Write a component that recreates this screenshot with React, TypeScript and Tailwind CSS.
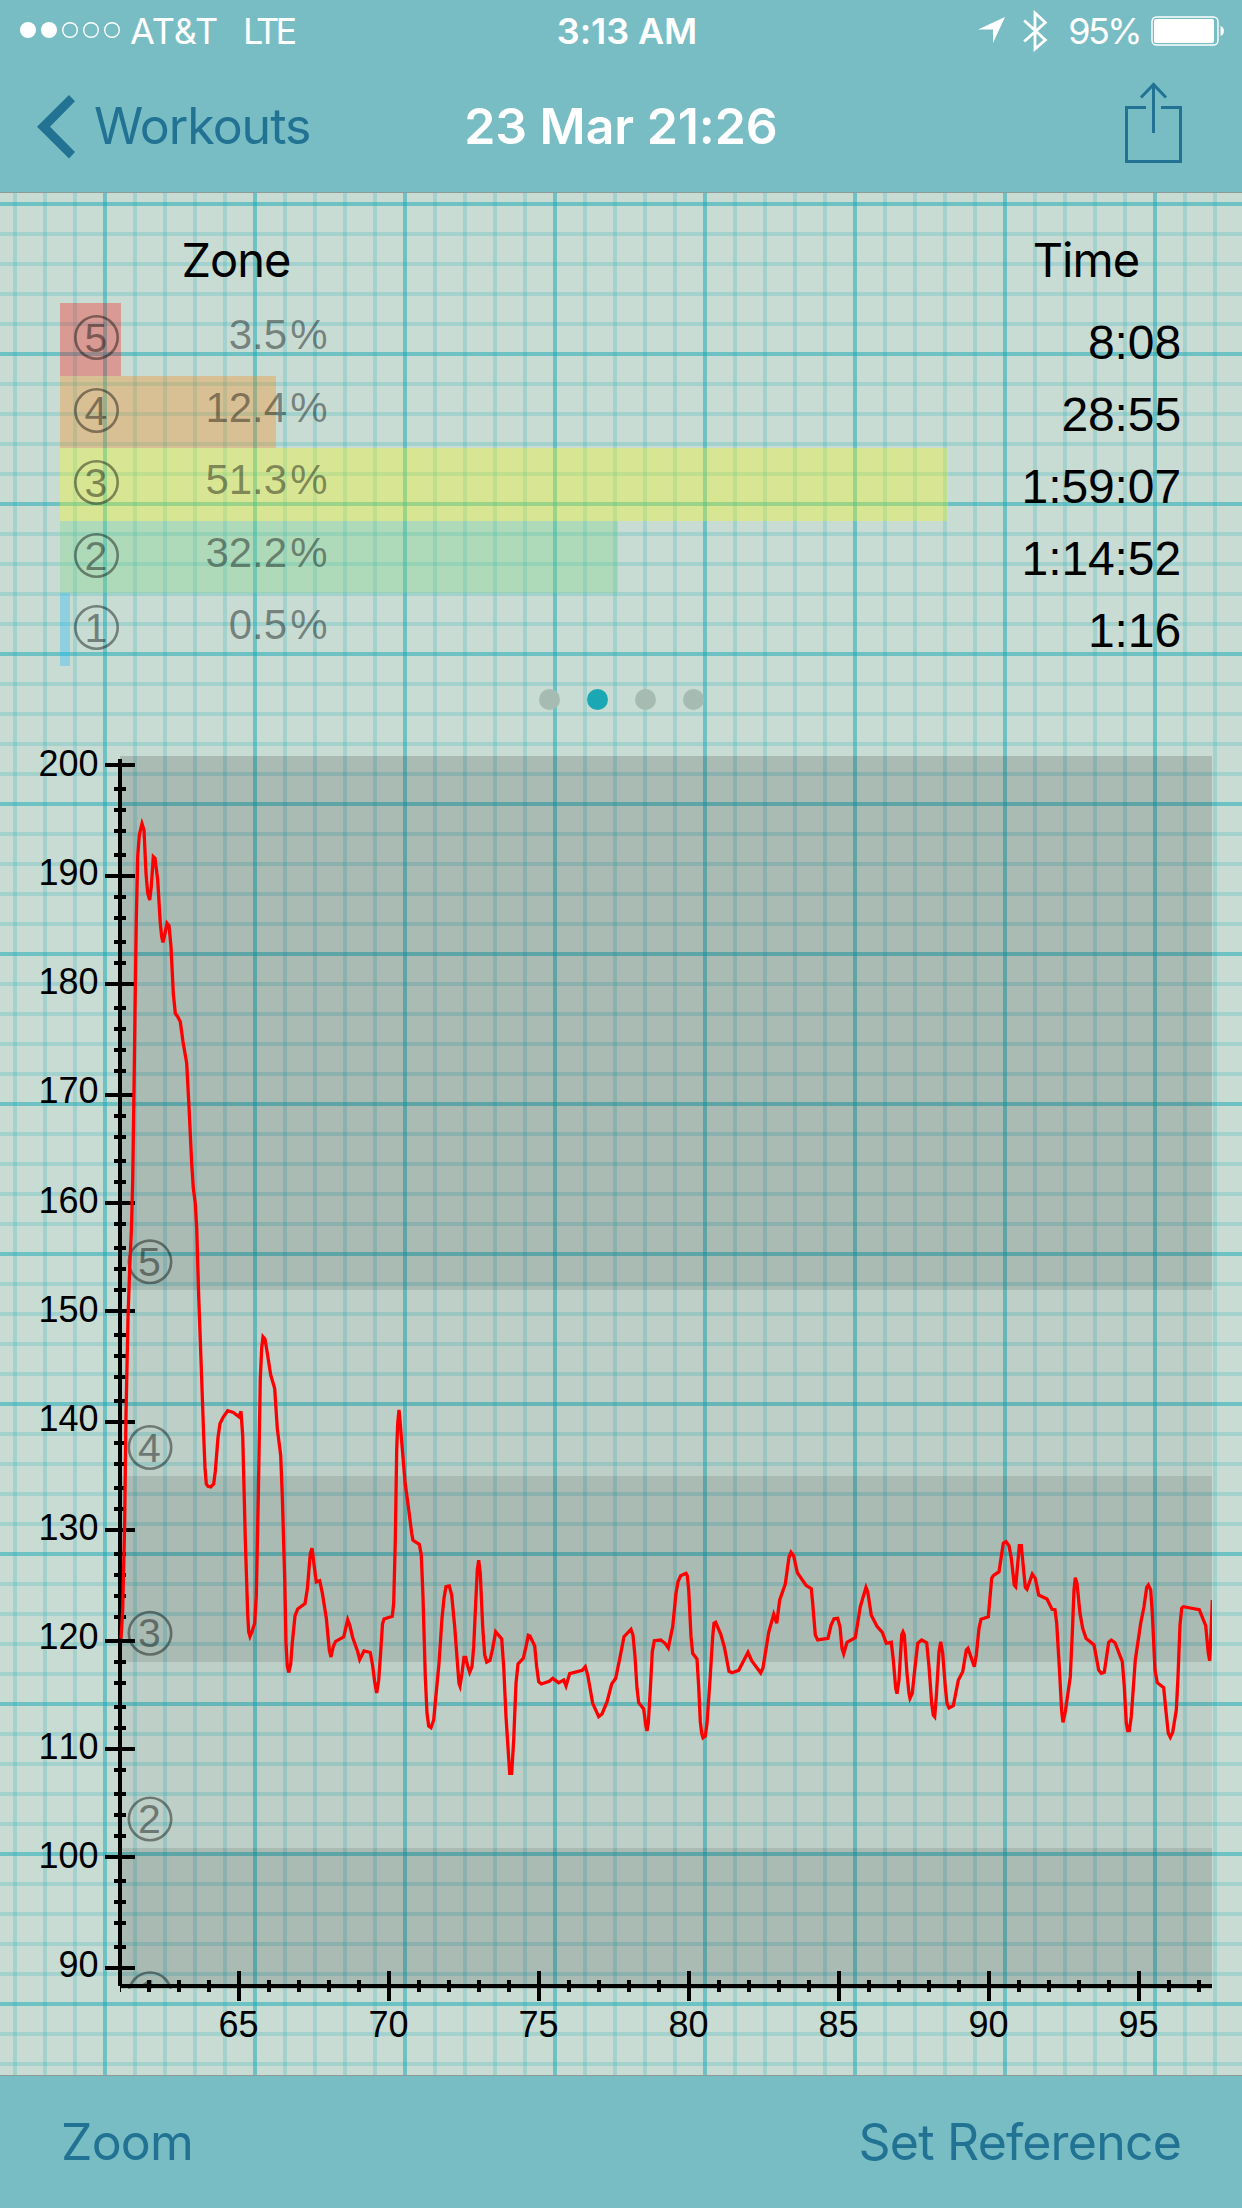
const zones = [
  { zone: 5, share: "3.5", width: 61, color: "bg-[#ff0000]/30" },
  { zone: 4, share: "12.4", width: 216, color: "bg-[#ff8000]/30" },
  { zone: 3, share: "51.3", width: 888, color: "bg-[#ffff00]/30" },
  { zone: 2, share: "32.2", width: 558, color: "bg-[#78d880]/30" },
  { zone: 1, share: "0.5", width: 9.5, color: "bg-[#0ab4ff]/30" },
];

const times = ["8:08", "28:55", "1:59:07", "1:14:52", "1:16"];

const bands = [
  { top: 756, bottom: 1290, alpha: 0.15 },
  { top: 1290, bottom: 1476, alpha: 0.055 },
  { top: 1476, bottom: 1662, alpha: 0.15 },
  { top: 1662, bottom: 1848, alpha: 0.055 },
  { top: 1848, bottom: 1989, alpha: 0.15 },
];

const zoneMarks = [
  { zone: 5, y: 1261.8 },
  { zone: 4, y: 1447.5 },
  { zone: 3, y: 1633.3 },
  { zone: 2, y: 1819 },
  { zone: 1, y: 1993.7 },
];

// One tick every 2 bpm from 200 down to 90, snapped to the 3x device grid.
const yTicks = Array.from({ length: 56 }, (_, k) => ({
  y: Math.round(255.455 + 7.2805 * k) * 3,
  major: k % 5 === 0,
}));
const yLabels = Array.from({ length: 12 }, (_, k) => ({ text: 200 - k * 10, y: 775.7 + 109.2 * k }));
const xTicks = Array.from({ length: 36 }, (_, k) => ({ x: 149 + 30 * k, major: k % 5 === 3 }));
const xLabels = Array.from({ length: 7 }, (_, k) => ({ text: 65 + 5 * k, x: 238.5 + 150 * k }));

const heartRate =
  "121,1638.6 122.7,1610.7 124.7,1521.4 126,1414 128,1318 129.7,1268 131.5,1228 132.7,1180 134,1090 135,1013 136.3,920 137.7,856.7 139.3,835 142,823.7 144,830 146,873.3 147.7,893.3 149.7,900 151.3,886.7 153.3,856.7 155,858.3 157.7,880 160.3,923.3 161.7,936.7 163,942.3 165,933.3 167,923.3 169,925.7 171,946.7 173.3,993.3 175.3,1013.3 177.7,1016.7 180.3,1021.7 183,1041.7 186.7,1063.3 189,1106.7 191.7,1163.3 193.3,1188.3 195.3,1203.3 196.7,1228 198.7,1296.4 201.3,1367.9 203.7,1435.7 205,1467.9 206.3,1484 208,1486.4 210.7,1487 213.7,1484 215.3,1471.4 218,1437.5 220,1423.6 223.3,1417 227.7,1410.7 233.3,1412.5 239,1416.8 241,1411.4 242.7,1435.7 245.3,1539.3 247.7,1614.3 248.7,1632 250,1636.4 252,1631.4 254.7,1623.2 256.3,1596.4 258.3,1496.4 260.3,1378.6 261.7,1348.2 263,1336.8 265,1339.3 267.7,1355.4 270.7,1375 274.7,1388.6 277.3,1428.6 280.7,1455.4 282.3,1496.4 284.7,1578.6 286,1642.9 287.3,1666 288.7,1672.5 290.7,1664.3 292.3,1642.9 295,1616 297.7,1609 305,1603.6 307.3,1589.3 310.3,1553.6 312,1548.2 314,1564.3 316.3,1582 319.7,1580.7 322.3,1592.9 326.3,1617.9 329.3,1650 331,1657 333.3,1646.4 335.7,1641.4 343.7,1637 346,1626.8 347.7,1619.6 349.7,1625 352.7,1637.5 357.7,1651.8 359.7,1659.6 364,1651 370.3,1652.5 372.7,1666 374.7,1682 376.7,1692.9 378.7,1680.4 380.7,1651.8 382.5,1624 384,1619 392.3,1616.3 393.7,1603.3 395.3,1540 396.7,1450 397.7,1423.3 399,1410 400,1420 401.3,1436.7 405,1481.7 409,1511.7 411.7,1533.3 413,1540.3 419.3,1544.3 421.3,1555 423,1596.7 425.3,1676.7 427,1713.3 428.7,1726 431,1727.7 433.7,1720 435.7,1698.3 439,1663.3 442,1618.3 444,1598.3 446,1586.7 449.3,1586 451.7,1595 454.7,1626.7 457.7,1666.7 459,1683.3 460,1686 462,1673.3 464,1657.3 465.7,1657.3 467.7,1666 469.7,1672.3 472,1666.7 473.7,1646.7 475.7,1603.3 477.3,1570 478.7,1560.3 480.3,1573.3 482.7,1626.7 484.7,1655 486.7,1662 490,1660.3 492.7,1648.3 495.7,1631.7 501.7,1639 503.7,1666.7 506,1716.7 509.7,1773.3 511.7,1773.3 513.7,1740 516,1683.3 518,1664 523.3,1658.3 526,1646.7 528.3,1635.3 530,1636 534.7,1646 536.7,1666.7 538.7,1681.7 541.3,1684 549.3,1681.3 552.7,1678.3 558.7,1682.7 563.7,1680 566,1686 569.7,1673.7 582.3,1670.3 585.3,1666.7 587.7,1675 592.7,1703.3 598.7,1716.7 602,1714 607,1702 611.7,1684 615.7,1678.3 620,1657.3 624,1636.7 631,1629.3 633,1635 635,1656.7 637,1688.3 638.7,1702.7 643.7,1709 645.7,1725 647,1731 648.3,1723.3 650.3,1690 652.3,1651.7 654.3,1640.7 660.7,1640 665,1643.3 668.3,1648 672.7,1626.7 676,1593.3 678,1581.7 680.7,1575.7 686,1573.3 687.3,1575.7 688.7,1590 691,1636.7 692.7,1653.3 697,1659 698.7,1686.7 700.3,1721.7 701.7,1733.3 703,1737.7 705.3,1736 707,1723.3 710,1680 712.7,1636.7 714,1623.3 715.7,1622.3 720.7,1634 724.3,1646.7 729,1671.3 732,1672.7 738.7,1670.3 748,1652.3 751.7,1660.7 760.7,1673 763,1667.7 768.7,1632.3 773.7,1614.3 776.7,1623.3 779.7,1600 785.3,1584 789,1557.3 791,1552.3 793.7,1556 797.3,1572.7 806,1585.3 811.3,1588.7 812.7,1603.3 815.3,1635 817.7,1640 828,1638.3 831,1625.3 834,1618.7 837.7,1618.3 840,1626.7 842,1648.3 843.7,1653.7 847,1642.3 855.3,1637.7 860.3,1606.7 866,1587.3 867.7,1591.7 871.3,1615.3 877,1626.3 882.3,1632.3 886.3,1643.3 891.3,1642.3 893.3,1660 895.7,1688.3 897,1693.7 899,1680 901.7,1635 903,1632 904.3,1635 907,1673.3 909,1693.3 910,1698.3 912.3,1693.3 914.7,1670 917.7,1643.3 921.7,1640 926.7,1642.7 929,1666.7 931.7,1703.3 933.3,1715 934.7,1716.7 936.3,1696.7 939,1651.7 940.7,1641.7 942.7,1653.3 945.3,1686.7 947,1703.3 949,1708 953.3,1705.7 958.3,1680.3 962.7,1671.7 966.3,1650 968,1648.3 974.3,1666.7 976.3,1655 979,1628.3 981,1619.3 988.3,1616.7 991.7,1578.3 993.3,1575.7 999,1571.7 1003.3,1543.3 1006,1541.7 1009,1545.7 1011.3,1558.3 1014.3,1585 1015.7,1586.7 1019.3,1545.7 1021.3,1545.7 1025.3,1587.3 1027,1589.3 1032.3,1574 1035.3,1578.3 1038.7,1595 1047,1599 1052,1609.3 1055,1609.7 1056.7,1623.3 1059.3,1666.7 1061.7,1711.7 1063,1722.3 1065.3,1711.7 1070.3,1676.7 1072.3,1633.3 1074,1590 1075.3,1577.7 1077,1583.3 1080,1613.3 1082.7,1628.3 1086,1638.3 1094,1645 1098.7,1670 1101.3,1673.3 1104.3,1672.3 1108.7,1642.3 1111.3,1640 1115,1642.7 1122.3,1661.7 1124.3,1686.7 1126.3,1723.3 1127.7,1730.7 1129.3,1730.7 1131.3,1716.7 1135.3,1660 1140.7,1623.3 1144,1606.7 1146.7,1587.3 1148.3,1585 1150.7,1590 1152.3,1613.3 1155,1670 1157.3,1682.7 1163.7,1687.7 1166,1711.7 1168.3,1733.3 1170.3,1737.3 1172.7,1732.3 1176.3,1710 1178,1676.7 1180,1625 1181.7,1608.3 1183.3,1606.7 1199.3,1609.7 1205.7,1625.7 1208.3,1653.3 1209.7,1660.7 1211,1633.3 1212.3,1600";

function StatusBar() {
  return (
    <div className="flex h-[62px] items-center text-[36px] leading-[62px] text-white">
      <div className="flex w-[400px] items-center">
        <svg className="ml-5 h-5 w-[104px]" viewBox="0 0 104 20" fill="none" stroke="#fff" strokeWidth="1.4">
          <circle cx="8" cy="9" r="8" fill="#fff" stroke="none" />
          <circle cx="29" cy="9" r="8" fill="#fff" stroke="none" />
          <circle cx="50" cy="9" r="7.3" />
          <circle cx="71" cy="9" r="7.3" />
          <circle cx="92" cy="9" r="7.3" />
        </svg>
        <span className="ml-[6px] w-[113px] tracking-[0px]">AT&amp;T</span>
        <span className="tracking-[-3.8px]">LTE</span>
      </div>
      <div className="flex-1 text-center font-semibold whitespace-nowrap">
        <span className="ml-3 tracking-[-0.1px]">3:13 AM</span>
      </div>
      <div className="flex w-[400px] items-center justify-end pr-4">
        <svg className="mr-[17px] h-[28px] w-[28px]" viewBox="0 0 28 28" fill="#fff">
          <path d="M27 0 15 26V12.5H0Z" />
        </svg>
        <svg className="mr-5 h-[42px] w-[25px]" viewBox="0 0 25 42" fill="none" stroke="#fff" strokeWidth="2.8">
          <path d="M1.2 10.5 22.4 30 12 39V3L22.4 12.5 1.2 31.5" />
        </svg>
        <span className="mr-[11px] tracking-[-2.6px]">95%</span>
        <svg className="h-[30px] w-[75px]" viewBox="0 0 75 30">
          <rect x="1" y="1" width="66" height="28" rx="4.5" fill="none" stroke="#fff" strokeWidth="1.4" />
          <rect x="3" y="3" width="60" height="24" rx="2" fill="#fff" />
          <path d="M69.5 10c4.5 1 4.5 9 0 10Z" fill="#fff" />
        </svg>
      </div>
    </div>
  );
}

function NavBar() {
  return (
    <div className="flex h-[130px] items-start pt-[18px] text-[50px] text-[#217293]">
      <div className="flex w-[420px] items-center">
        <svg className="mt-[2px] ml-[37px] h-16 w-[38px]" viewBox="0 0 38 64" fill="#217293">
          <path d="M32 0 38 6.3 13 31.7 38 57 32 63.5 0 31.7Z" />
        </svg>
        <span className="ml-[19px] leading-[92px] tracking-[-1px]">Workouts</span>
      </div>
      <h1 className="flex-1 text-center leading-[92px] font-semibold tracking-[-0.05px] whitespace-nowrap text-white">
        23 Mar 21:26
      </h1>
      <div className="flex w-[420px] justify-end pr-[60px]">
        <svg className="mt-[2px] h-[82px] w-[57px]" viewBox="0 0 57 82" fill="none" stroke="#217293" strokeWidth="3">
          <path d="M21 25.5H1.5V79.5H55.5V25.5H36" />
          <path d="M28.5 51V3M16 15.5 28.5 2.5 41 15.5" />
        </svg>
      </div>
    </div>
  );
}

function CircledDigit({ digit }: { digit: number }) {
  return (
    <svg className="block size-[45px]" viewBox="0 0 45 45" opacity="0.42">
      <circle cx="22.5" cy="22.5" r="21.2" fill="none" stroke="#000" strokeWidth="2.6" />
      <text x="22" y="36.6" fontSize="41" textAnchor="middle">
        {digit}
      </text>
    </svg>
  );
}

function Summary() {
  return (
    <section className="flex h-[547px] flex-col">
      <div className="flex pt-[37px] text-[47px] leading-[60px] text-black">
        <h2 className="ml-[136px] w-[200px] text-center tracking-[-1px]">Zone</h2>
        <h2 className="ml-[650px] w-[200px] text-center tracking-[-0.9px]">Time</h2>
      </div>
      <div className="flex h-[363px] shrink-0 justify-between pt-[13px] pr-[61px] pl-[60px] font-['Liberation_Sans',sans-serif]">
        <ol className="flex flex-col">
          {zones.map((z) => (
            <li key={z.zone} className="relative flex h-[72.6px] shrink-0 items-start pl-[13.5px]">
              <div className={`absolute top-0 left-0 h-full ${z.color}`} style={{ width: z.width }} />
              <div className="relative pt-[12px]">
                <CircledDigit digit={z.zone} />
              </div>
              <span className="relative w-[209px] text-right text-[42px] leading-[63px] text-black/42">
                {z.share}
                <span className="ml-[3px]">%</span>
              </span>
            </li>
          ))}
        </ol>
        <ol className="pt-[4.4px] text-right text-[48px] leading-[72px] tracking-[-0.1px] text-black">
          {times.map((t) => (
            <li key={t}>{t}</li>
          ))}
        </ol>
      </div>
      <div className="mt-[36px] flex justify-center gap-[27px]">
        <span className="size-[21px] rounded-full bg-[#a6bbb2]" />
        <span className="size-[21px] rounded-full bg-[#1ba7b3]" />
        <span className="size-[21px] rounded-full bg-[#a6bbb2]" />
        <span className="size-[21px] rounded-full bg-[#a6bbb2]" />
      </div>
    </section>
  );
}

function Chart() {
  return (
    <svg
      className="block h-[1320px] w-[1242px] font-['Liberation_Sans',sans-serif] [font-kerning:none]"
      viewBox="0 740 1242 1320"
    >
      <clipPath id="plot">
        <rect x="118" y="740" width="1094" height="1248.7" />
      </clipPath>
      {bands.map((b) => (
        <rect key={b.top} x="120" y={b.top} width="1092" height={b.bottom - b.top} fill="#000" fillOpacity={b.alpha} />
      ))}
      <g clipPath="url(#plot)" opacity="0.42">
        {zoneMarks.map((m) => (
          <g key={m.zone}>
            <circle cx="150" cy={m.y} r="21.2" fill="none" stroke="#000" strokeWidth="2.6" />
            <text x="149.5" y={m.y + 14} fontSize="41" textAnchor="middle">
              {m.zone}
            </text>
          </g>
        ))}
      </g>
      <path d="M120 759V1986" stroke="#000" strokeWidth="4" />
      <path d="M120 1986H1212" stroke="#000" strokeWidth="4" />
      <path d="M120.5 1986V1992" stroke="#000" strokeWidth="1" />
      {yTicks.map((t) => (
        <path key={t.y} d={t.major ? `M105 ${t.y}H135` : `M114 ${t.y}H126`} stroke="#000" strokeWidth="4" />
      ))}
      {xTicks.map((t) => (
        <path key={t.x} d={t.major ? `M${t.x} 1971V2001` : `M${t.x} 1980V1992`} stroke="#000" strokeWidth="4" />
      ))}
      {yLabels.map((l) => (
        <text key={l.text} x="98.5" y={l.y} fontSize="36" textAnchor="end">
          {l.text}
        </text>
      ))}
      {xLabels.map((l) => (
        <text key={l.text} x={l.x} y="2037" fontSize="36" textAnchor="middle">
          {l.text}
        </text>
      ))}
      <g clipPath="url(#plot)">
        <polyline points={heartRate} fill="none" stroke="#f00" strokeWidth="3.3" strokeMiterlimit="4" />
      </g>
    </svg>
  );
}

export default function App() {
  return (
    <div className="flex h-[2208px] w-[1242px] flex-col overflow-hidden bg-[#c8dcd3] bg-[image:linear-gradient(to_right,#14a7b480_0_4px,transparent_4px_30px,#14a7b433_30px_34px,transparent_34px_60px,#14a7b433_60px_64px,transparent_64px_90px,#14a7b433_90px_94px,transparent_94px_120px,#14a7b433_120px_124px,transparent_124px),linear-gradient(to_bottom,#14a7b480_0_4px,transparent_4px_30px,#14a7b433_30px_34px,transparent_34px_60px,#14a7b433_60px_64px,transparent_64px_90px,#14a7b433_90px_94px,transparent_94px_120px,#14a7b433_120px_124px,transparent_124px)] bg-size-[150px_150px] bg-position-[103px_52px] font-['Inter',sans-serif]">
      <header className="h-[193px] shrink-0 border-b border-[#8d9c99] bg-[#78bdc4]">
        <StatusBar />
        <NavBar />
      </header>
      <main className="h-[1882px] shrink-0">
        <Summary />
        <Chart />
      </main>
      <footer className="flex h-[133px] shrink-0 justify-between border-t border-[#8d9c99] bg-[#78bdc4] px-[61px] text-[50px] leading-[132px] tracking-[-0.8px] text-[#217293]">
        <span>Zoom</span>
        <span>Set Reference</span>
      </footer>
    </div>
  );
}
